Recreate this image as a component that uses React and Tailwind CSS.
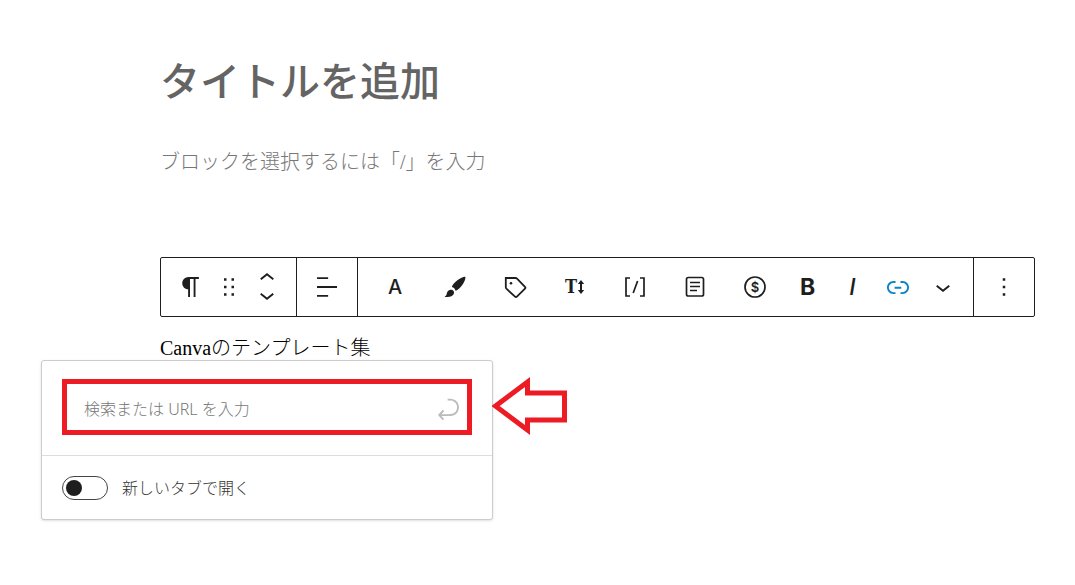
import React, { useState } from "react";

const Icon = ({ children, className = "", ...props }) => (
  <svg
    width="30"
    height="30"
    viewBox="0 0 24 24"
    fill="currentColor"
    aria-hidden="true"
    className={`shrink-0 ${className}`}
    {...props}
  >
    {children}
  </svg>
);

const ToolButton = ({ label, wide, children, className = "" }) => (
  <button
    type="button"
    aria-label={label}
    className={`flex h-full shrink-0 items-center justify-center ${wide ? "w-15" : "w-[45px]"} ${className}`}
  >
    {children}
  </button>
);

const BlockToolbar = () => (
  <div
    role="toolbar"
    aria-label="ブロックツール"
    className="flex h-15 rounded-xs border border-[#1e1e1e] text-[#1e1e1e]"
  >
    {/* Block type and movers */}
    <div className="flex border-r border-[#1e1e1e] px-[7px]">
      <ToolButton label="段落">
        <Icon>
          <path d="M18.3 4H9.9v-.1l-.9.2c-2.3.4-4 2.4-4 4.8s1.7 4.4 4 4.8l.7.1V20h1.5V5.5h2.9V20h1.5V5.5h2.7V4z" />
        </Icon>
      </ToolButton>
      <button type="button" aria-label="ドラッグ" className="flex w-8 items-center justify-center">
        <Icon>
          <path d="M8 7h2V5H8v2zm0 6h2v-2H8v2zm0 6h2v-2H8v2zm6-14v2h2V5h-2zm0 8h2v-2h-2v2zm0 6h2v-2h-2v2z" />
        </Icon>
      </button>
      <div className="flex w-11 flex-col">
        <button type="button" aria-label="上に移動" className="flex flex-1 items-end justify-center">
          <Icon height="15" viewBox="0 7.2 24 12">
            <path d="M6.500 12.4L12 8l5.5 4.4-.9 1.2L12 10l-4.5 3.6-1-1.2z" />
          </Icon>
        </button>
        <button type="button" aria-label="下に移動" className="flex flex-1 items-start justify-center">
          <Icon height="15" viewBox="0 5.6 24 12">
            <path d="M17.5 11.6L12 16l-5.5-4.4.9-1.2L12 14l4.5-3.6 1 1.2z" />
          </Icon>
        </button>
      </div>
    </div>

    {/* Alignment */}
    <div className="flex border-r border-[#1e1e1e]">
      <ToolButton label="配置" wide>
        <Icon>
          <path d="M4 19.8h8.9v-1.5H4v1.5zm8.9-15.6H4v1.5h8.9V4.2zm-8.9 7v1.5h16v-1.5H4z" />
        </Icon>
      </ToolButton>
    </div>

    {/* Inline formatting */}
    <div className="flex flex-1 border-r border-[#1e1e1e] px-[7px]">
      <ToolButton label="文字色" wide>
        <span className="font-[Inter] text-[20px] leading-none font-medium">A</span>
      </ToolButton>
      <ToolButton label="マーカー" wide>
        <Icon viewBox="0 0 30 30">
          <path d="M25.2 4.8c.7.7-.2 4.3-2.4 7.5-2.1 3.1-5 5.9-7.2 6.5-.7-2-1.6-3-3.8-3.7.5-2.2 3-5 5.900-7.1 3.1-2.3 6.800-3.9 7.5-3.2z" />
          <path d="M10.3 17.8c2.3-.5 4.2 1.2 3.7 3.5-.6 2.9-4.3 4.3-9.5 3.5 1.6-.7 2-1.7 2.3-3.2.3-2.1 1.7-3.4 3.5-3.8z" />
        </Icon>
      </ToolButton>
      <ToolButton label="バッジ" wide>
        <Icon viewBox="0 0 30 30">
          <path
            d="M5.8 6h9.7c.6 0 1.1.2 1.5.6l8 8.3c.6.6.6 1.2 0 1.8l-8.1 7.9c-.6.6-1.3.6-1.9 0l-8.600-7.9c-.4-.4-.6-.8-.6-1.4z"
            fill="none"
            stroke="currentColor"
            strokeWidth="1.8"
          />
          <circle cx="11" cy="11.3" r="1.3" />
        </Icon>
      </ToolButton>
      <ToolButton label="文字サイズ" wide>
        <span className="font-['DejaVu_Serif_Condensed','DejaVu_Serif'] text-[18px] leading-none font-bold">T</span>
        <svg width="8" height="16" viewBox="0 0 8 16" fill="currentColor" aria-hidden="true">
          <path d="M4 1l3.2 4H5v6h2.2L4 15 .8 11H3V5H.8z" />
        </svg>
      </ToolButton>
      <ToolButton label="ショートコード" wide>
        <Icon viewBox="0 0 30 30" fill="none" stroke="currentColor" strokeWidth="1.7">
          <path d="M10 6H6v18h4M20 6h4v18h-4M17.6 9l-4.4 12" />
        </Icon>
      </ToolButton>
      <ToolButton label="注釈" wide>
        <Icon viewBox="0 0 30 30" fill="none" stroke="currentColor" strokeWidth="1.7">
          <rect x="6.5" y="5.500" width="17" height="18.5" rx="1.8" />
          <path d="M10 10.5h10M10 14.5h10M10 18.5h7" />
        </Icon>
      </ToolButton>
      <ToolButton label="価格" wide>
        <Icon viewBox="0 0 30 30">
          <circle cx="15" cy="15" r="10" fill="none" stroke="currentColor" strokeWidth="1.7" />
          <text x="15" y="20" textAnchor="middle" className="font-[Inter] text-[13px] font-semibold">
            $
          </text>
        </Icon>
      </ToolButton>
      <ToolButton label="太字">
        <span className="font-[Inter] text-[23px] leading-none font-bold">B</span>
      </ToolButton>
      <ToolButton label="イタリック">
        <span className="font-[Inter] text-[23px] leading-none font-medium italic">I</span>
      </ToolButton>
      <ToolButton label="リンク" className="text-[#0a84c4]">
        <Icon>
          <path d="M15.6 7.2H14v1.5h1.6c2 0 3.7 1.7 3.7 3.7s-1.7 3.7-3.7 3.7H14v1.5h1.6c2.8 0 5.2-2.3 5.2-5.2 0-2.9-2.3-5.2-5.2-5.2zM4.7 12.4c0-2 1.7-3.7 3.7-3.7H10V7.2H8.4c-2.9 0-5.2 2.3-5.2 5.2 0 2.9 2.3 5.2 5.2 5.2H10v-1.5H8.4c-2 0-3.7-1.7-3.7-3.7zm4.6.9h5.3v-1.5H9.3v1.5z" />
        </Icon>
      </ToolButton>
      <ToolButton label="さらに表示">
        <Icon>
          <path d="M17.5 11.6L12 16l-5.5-4.4.9-1.2L12 14l4.5-3.6 1 1.2z" />
        </Icon>
      </ToolButton>
    </div>

    <ToolButton label="オプション" wide>
      <Icon>
        <path d="M13 19h-2v-2h2v2zm0-6h-2v-2h2v2zm0-6h-2V5h2v2z" />
      </Icon>
    </ToolButton>
  </div>
);

const LinkPopover = () => {
  const [url, setUrl] = useState("");
  const [newTab, setNewTab] = useState(false);

  return (
    <div className="relative w-[452px] rounded-[3px] border border-[#ccc] bg-white font-['Noto_Sans','Noto_Sans_CJK_JP',sans-serif] text-base shadow-sm">
      <div className="border-b border-[#ddd] px-5 pt-[18px] pb-5">
        <div className="flex h-14 items-center border-5 border-[#ed1c24] pt-1 pr-1 pl-[17px]">
          <input
            type="text"
            aria-label="URL"
            placeholder="検索または URL を入力"
            value={url}
            onChange={(e) => setUrl(e.target.value)}
            className="min-w-0 flex-1 font-light outline-none placeholder:text-[#777]"
          />
          <button type="button" aria-label="送信" className="text-[#bbb]">
            <Icon>
              <path d="M6.734 16.106l2.176-2.38-1.093-1.028-3.846 4.158 3.846 4.157 1.093-1.027-2.176-2.38h2.811c1.125 0 2.25.03 3.374 0 1.428-.001 3.362-.25 4.963-1.277 1.66-1.065 2.868-2.906 2.868-5.859 0-2.479-1.327-4.896-3.65-5.93-1.82-.813-3.044-.8-4.806-.788l-.567.002v1.5c.184 0 .368 0 .553-.002 1.82-.007 2.704-.014 4.21.657 1.854.827 2.76 2.657 2.76 4.561 0 2.472-.973 3.824-2.178 4.596-1.258.807-2.864 1.04-4.163 1.04h-.02c-1.115.03-2.229 0-3.344 0H6.734z" />
            </Icon>
          </button>
        </div>
      </div>
      <div className="flex h-[63px] items-center px-5">
        <input
          id="new-tab"
          type="checkbox"
          checked={newTab}
          onChange={(e) => setNewTab(e.target.checked)}
          className="flex h-6 w-[46px] shrink-0 appearance-none items-center rounded-full border border-[#444] px-[3px] before:size-4 before:rounded-full before:bg-[#1e1e1e] checked:justify-end"
        />
        <label htmlFor="new-tab" className="pl-[14px] font-light text-[#333]">
          新しいタブで開く
        </label>
      </div>

      {/* Callout arrow pointing at the URL field */}
      <svg
        width="76"
        height="58"
        viewBox="0 0 76 58"
        fill="#fff"
        stroke="#ed1c24"
        strokeWidth="5"
        aria-hidden="true"
        className="absolute top-4 left-full"
      >
        <path d="M3.5 29L35.5 5v11h37v27h-37v10z" />
      </svg>
    </div>
  );
};

const App = () => {
  return (
    <main className="min-h-screen bg-white pt-[53px] pr-10 pl-[41px] font-['Liberation_Serif','Noto_Sans_CJK_JP',serif]">
      <div className="pl-[119px]">
        <h1 className="text-[40px] leading-[60px] font-medium text-[#646464]">タイトルを追加</h1>
        <p className="mt-[34px] text-xl leading-[30px] font-light text-[#777]">
          ブロックを選択するには「/」を入力
        </p>
        <div className="mt-20">
          <BlockToolbar />
        </div>
        <p className="mt-[19px] text-xl leading-6 font-light text-black">Canvaのテンプレート集</p>
      </div>
      <LinkPopover />
    </main>
  );
};

export default App;
